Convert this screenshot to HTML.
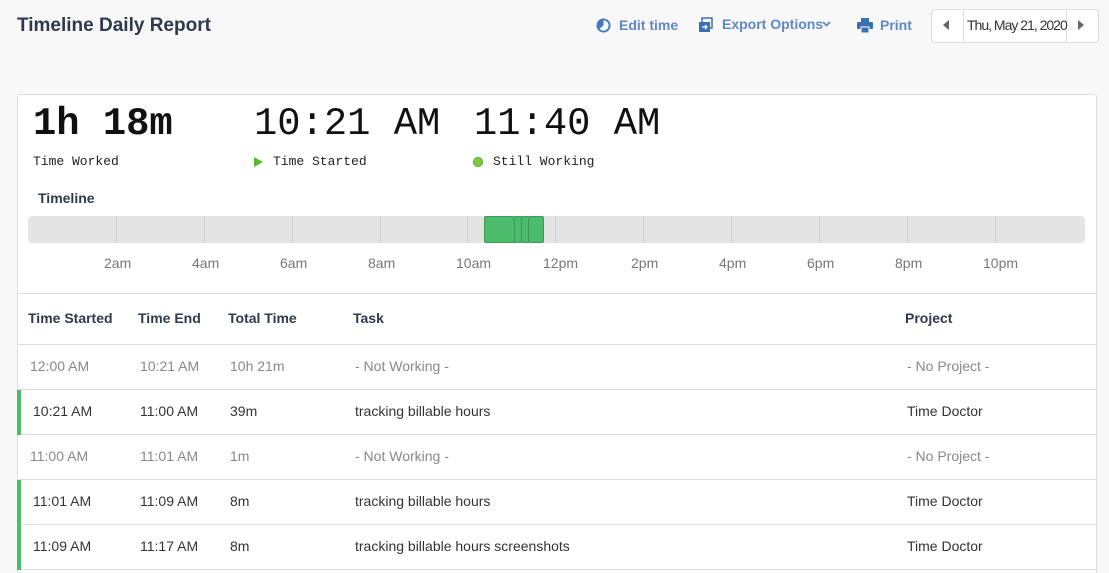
<!DOCTYPE html>
<html><head><style>
*{margin:0;padding:0;box-sizing:border-box}
html,body{width:1109px;height:573px;overflow:hidden}
body{background:#f8f8f8;font-family:"Liberation Sans",sans-serif;position:relative;color:#333}
.abs{position:absolute;white-space:nowrap}
h1{position:absolute;left:17px;top:15px;font-size:19px;font-weight:bold;color:#2e3a4b}
.lnk{color:#5f88c6;font-weight:bold;font-size:14px}
.card{position:absolute;left:17px;top:94px;width:1080px;height:490px;background:#fff;border:1px solid #ddd;border-radius:3px}
.big{font-family:"Liberation Mono",monospace;font-size:38.8px;color:#111;top:102px}
.sm{font-family:"Liberation Mono",monospace;font-size:13px;color:#222;top:154px}
.bar{position:absolute;left:28px;top:216px;width:1057px;height:27px;background:#e4e4e4;border-radius:4px}
.div{position:absolute;top:0;width:1px;height:27px;background:#d0d0d0}
.g{position:absolute;top:0;height:27px;background:#4cbb6c;border:1px solid #3a9a55;border-radius:2px}
.tk{font-size:14px;color:#777;top:255px}
.hr{position:absolute;left:18px;width:1078px;height:1px;background:#ddd}
.th{font-size:14px;font-weight:bold;color:#2e3a4b;top:310px}
.td{font-size:14px;color:#333}
.gray{color:#888}
.gb{position:absolute;left:17px;width:4px;height:45px;background:#4cbb6c}
</style></head><body>
<h1>Timeline Daily Report</h1>
<svg class="abs" style="left:596px;top:18px" width="15" height="15" viewBox="0 0 16 16"><circle cx="8" cy="8" r="6.5" fill="none" stroke="#4a78c0" stroke-width="2"/><path d="M8 8 L8 1.5 A6.5 6.5 0 0 0 3 12 Z" fill="#4a78c0"/></svg>
<div class="abs lnk" style="left:619px;top:17px">Edit time</div>
<svg class="abs" style="left:698px;top:17px" width="16" height="16" viewBox="0 0 16 16"><rect x="4" y="1" width="10" height="10" fill="none" stroke="#3a6fb0" stroke-width="1.5"/><rect x="1" y="5" width="11" height="10" fill="#3a6fb0"/><path d="M4 10h5M7 8l2 2-2 2" stroke="#fff" stroke-width="1.3" fill="none"/></svg>
<div class="abs lnk" style="left:722px;top:16px">Export Options</div>
<svg class="abs" style="left:822px;top:21px" width="9" height="6"><path d="M1 1l3.5 3.5L8 1" stroke="#5f88c6" stroke-width="1.8" fill="none"/></svg>
<svg class="abs" style="left:857px;top:18px" width="16" height="15" viewBox="0 0 16 15"><rect x="4" y="0" width="8" height="4" fill="#3a6fb0"/><rect x="0" y="4" width="16" height="7" rx="1" fill="#3a6fb0"/><rect x="4" y="9" width="8" height="6" fill="#3a6fb0" stroke="#fff" stroke-width="1"/></svg>
<div class="abs lnk" style="left:880px;top:17px">Print</div>
<div class="abs" style="left:931px;top:9px;width:168px;height:34px;background:#fff;border:1px solid #ddd;border-radius:4px"></div>
<div class="abs" style="left:963px;top:10px;width:1px;height:32px;background:#ddd"></div>
<div class="abs" style="left:1066px;top:10px;width:1px;height:32px;background:#ddd"></div>
<svg class="abs" style="left:943px;top:20px" width="7" height="10"><path d="M6 0v10L0 5z" fill="#666"/></svg>
<svg class="abs" style="left:1078px;top:20px" width="7" height="10"><path d="M0 0v10l6-5z" fill="#666"/></svg>
<div class="abs" style="left:967px;top:17px;font-size:14px;letter-spacing:-1px;color:#333">Thu, May 21, 2020</div>
<div class="card"></div>
<div class="abs big" style="left:33px;font-weight:bold">1h 18m</div>
<div class="abs big" style="left:254px">10:21 AM</div>
<div class="abs big" style="left:474px">11:40 AM</div>
<div class="abs sm" style="left:33px">Time Worked</div>
<svg class="abs" style="left:254px;top:157px" width="10" height="10"><path d="M0 0v10l9-5z" fill="#5ab82a"/></svg>
<div class="abs sm" style="left:273px">Time Started</div>
<div class="abs" style="left:473px;top:157px;width:10px;height:10px;border-radius:50%;background:#7ccf3a;border:1px solid #5aa02a"></div>
<div class="abs sm" style="left:493px">Still Working</div>
<div class="abs" style="left:38px;top:190px;font-size:14px;font-weight:bold;color:#2e3a4b">Timeline</div>
<div class="bar">
<div class="div" style="left:88px"></div><div class="div" style="left:176px"></div><div class="div" style="left:264px"></div><div class="div" style="left:352px"></div><div class="div" style="left:439px"></div><div class="div" style="left:527px"></div><div class="div" style="left:615px"></div><div class="div" style="left:703px"></div><div class="div" style="left:791px"></div><div class="div" style="left:879px"></div><div class="div" style="left:967px"></div>
<div class="g" style="left:456px;width:31px"></div><div class="g" style="left:486px;width:8px"></div><div class="g" style="left:493px;width:8px"></div><div class="g" style="left:500px;width:16px"></div>
</div>
<div class="abs tk" style="left:104px">2am</div><div class="abs tk" style="left:192px">4am</div><div class="abs tk" style="left:280px">6am</div><div class="abs tk" style="left:368px">8am</div><div class="abs tk" style="left:456px">10am</div><div class="abs tk" style="left:543px">12pm</div><div class="abs tk" style="left:631px">2pm</div><div class="abs tk" style="left:719px">4pm</div><div class="abs tk" style="left:807px">6pm</div><div class="abs tk" style="left:895px">8pm</div><div class="abs tk" style="left:983px">10pm</div>
<div class="hr" style="top:293px"></div>
<div class="abs th" style="left:28px">Time Started</div><div class="abs th" style="left:138px">Time End</div><div class="abs th" style="left:228px">Total Time</div><div class="abs th" style="left:353px">Task</div><div class="abs th" style="left:905px">Project</div>
<div class="hr" style="top:344px"></div><div class="hr" style="top:389px"></div><div class="hr" style="top:434px"></div><div class="hr" style="top:479px"></div><div class="hr" style="top:524px"></div><div class="hr" style="top:569px"></div>
<div class="gb" style="top:390px"></div><div class="gb" style="top:480px"></div><div class="gb" style="top:525px"></div>
<div class="abs td gray" style="left:30px;top:358px">12:00 AM</div><div class="abs td gray" style="left:140px;top:358px">10:21 AM</div><div class="abs td gray" style="left:230px;top:358px">10h 21m</div><div class="abs td gray" style="left:355px;top:358px">- Not Working -</div><div class="abs td gray" style="left:907px;top:358px">- No Project -</div>
<div class="abs td" style="left:33px;top:403px">10:21 AM</div><div class="abs td" style="left:140px;top:403px">11:00 AM</div><div class="abs td" style="left:230px;top:403px">39m</div><div class="abs td" style="left:355px;top:403px">tracking billable hours</div><div class="abs td" style="left:907px;top:403px">Time Doctor</div>
<div class="abs td gray" style="left:30px;top:448px">11:00 AM</div><div class="abs td gray" style="left:140px;top:448px">11:01 AM</div><div class="abs td gray" style="left:230px;top:448px">1m</div><div class="abs td gray" style="left:355px;top:448px">- Not Working -</div><div class="abs td gray" style="left:907px;top:448px">- No Project -</div>
<div class="abs td" style="left:33px;top:493px">11:01 AM</div><div class="abs td" style="left:140px;top:493px">11:09 AM</div><div class="abs td" style="left:230px;top:493px">8m</div><div class="abs td" style="left:355px;top:493px">tracking billable hours</div><div class="abs td" style="left:907px;top:493px">Time Doctor</div>
<div class="abs td" style="left:33px;top:538px">11:09 AM</div><div class="abs td" style="left:140px;top:538px">11:17 AM</div><div class="abs td" style="left:230px;top:538px">8m</div><div class="abs td" style="left:355px;top:538px">tracking billable hours screenshots</div><div class="abs td" style="left:907px;top:538px">Time Doctor</div>
</body></html>
